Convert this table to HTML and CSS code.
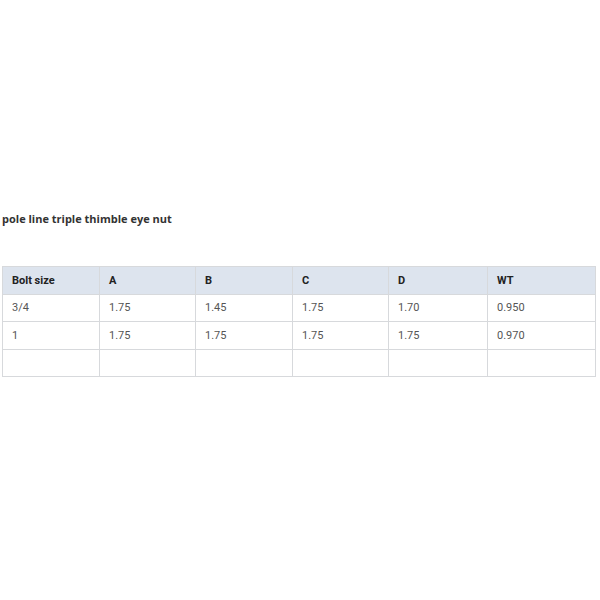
FILE: index.html
```html
<!DOCTYPE html>
<html>
<head>
<meta charset="utf-8">
<link rel="stylesheet" href="styles.css">
</head>
<body>
<div class="page">
  <h2 class="title">pole line triple thimble eye nut</h2>
  <table class="spec">
    <colgroup>
      <col class="c1"><col class="c2"><col class="c3"><col class="c4"><col class="c5"><col class="c6">
    </colgroup>
    <thead>
      <tr><th>Bolt size</th><th>A</th><th>B</th><th>C</th><th>D</th><th>WT</th></tr>
    </thead>
    <tbody>
      <tr><td>3/4</td><td>1.75</td><td>1.45</td><td>1.75</td><td>1.70</td><td>0.950</td></tr>
      <tr><td>1</td><td>1.75</td><td>1.75</td><td>1.75</td><td>1.75</td><td>0.970</td></tr>
      <tr><td></td><td></td><td></td><td></td><td></td><td></td></tr>
    </tbody>
  </table>
</div>
</body>
</html>
```
FILE: styles.css
```css
html, body {
  margin: 0;
  background: #fff;
}
.page {
  padding: 211px 5px 0 2px;
  font-family: Roboto, "Liberation Sans", sans-serif;
}
.title {
  margin: 0 0 39px 0;
  font-family: "Open Sans", sans-serif;
  font-size: 11px;
  font-weight: 700;
  color: #333;
  line-height: 16px;
}
.spec {
  width: 593px;
  table-layout: fixed;
  border-collapse: collapse;
  font-size: 11px;
}
.spec th, .spec td {
  border: 1px solid #d7d9dc;
  text-align: left;
  padding: 0 9px;
  height: 26.5px;
}
.spec th {
  background: #dde4ee;
  color: #222;
  font-weight: 700;
}
.spec td {
  color: #555;
}
.c1 { width: 97px; }
.c2 { width: 96px; }
.c3 { width: 97px; }
.c4 { width: 96px; }
.c5 { width: 99px; }
.c6 { width: 108px; }
```
